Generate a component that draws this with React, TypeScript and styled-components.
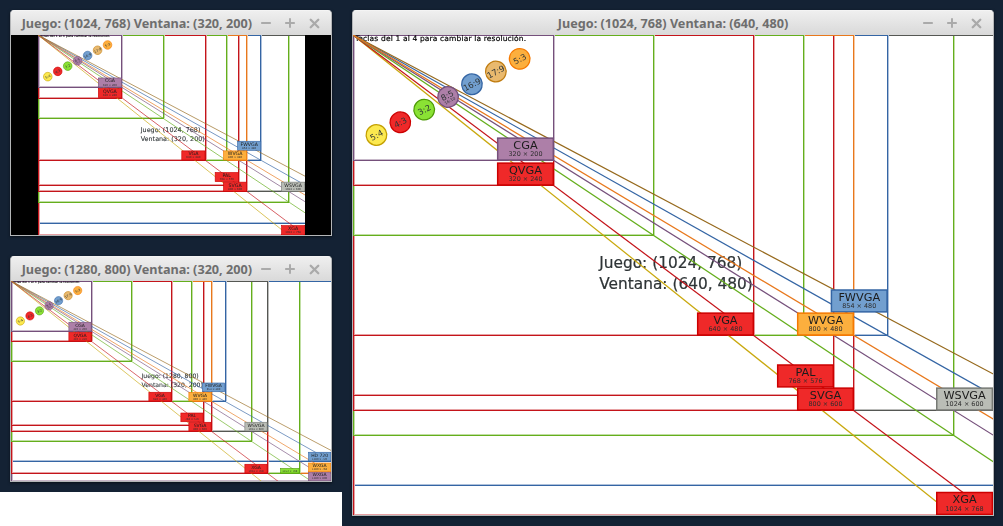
import styled, { createGlobalStyle } from 'styled-components';
import { Minus, Plus, X } from 'lucide-react';

const GlobalStyle = createGlobalStyle`
  html, body {
    margin: 0;
    height: 100%;
    background: #142234;
    overflow: hidden;
  }
`;

interface Tone {
  line: string;
  ghost: string;
  fill: string;
  edge: string;
}

const TONES: Record<string, Tone> = {
  yellow: { line: '#c9a80e', ghost: '#e9dc9f', fill: '#fce94f', edge: '#c4a000' },
  red: { line: '#c4141a', ghost: '#e7a1a3', fill: '#ef2929', edge: '#cc0000' },
  green: { line: '#65ae1c', ghost: '#c1dfa4', fill: '#8ae234', edge: '#4e9a06' },
  orange: { line: '#e8781c', ghost: '#f6c9a4', fill: '#fcaf3e', edge: '#f57900' },
  purple: { line: '#75507b', ghost: '#c8b9ca', fill: '#ad7fa8', edge: '#75507b' },
  blue: { line: '#3465a4', ghost: '#aec1db', fill: '#729fcf', edge: '#3465a4' },
  brown: { line: '#96691c', ghost: '#d5c3a4', fill: '#e9b96e', edge: '#c17d11' },
  grey: { line: '#555753', ghost: '#bbbcba', fill: '#babdb6', edge: '#777a75' },
};

interface Mode {
  w: number;
  h: number;
  tone: string;
  name?: string;
  bottom?: number;
  small?: boolean;
}

const MODES: Mode[] = [
  { w: 1280, h: 800, tone: 'purple', name: 'WXGA' },
  { w: 1280, h: 768, tone: 'orange', name: 'WXGA', bottom: 763 },
  { w: 1152, h: 768, tone: 'green', small: true },
  { w: 1280, h: 720, tone: 'blue', name: 'HD 720' },
  { w: 1024, h: 768, tone: 'red', name: 'XGA' },
  { w: 960, h: 640, tone: 'green' },
  { w: 1024, h: 600, tone: 'grey', name: 'WSVGA' },
  { w: 800, h: 600, tone: 'red', name: 'SVGA' },
  { w: 768, h: 576, tone: 'red', name: 'PAL', bottom: 563 },
  { w: 854, h: 480, tone: 'blue', name: 'FWVGA', bottom: 443 },
  { w: 800, h: 480, tone: 'orange', name: 'WVGA' },
  { w: 720, h: 480, tone: 'green' },
  { w: 640, h: 480, tone: 'red', name: 'VGA' },
  { w: 480, h: 320, tone: 'green' },
  { w: 320, h: 240, tone: 'red', name: 'QVGA' },
  { w: 320, h: 200, tone: 'purple', name: 'CGA' },
];

const RATIOS = [
  { text: '5:4', tone: 'yellow', slope: 4 / 5 },
  { text: '4:3', tone: 'red', slope: 3 / 4 },
  { text: '3:2', tone: 'green', slope: 2 / 3 },
  { text: '8:5', tone: 'purple', slope: 5 / 8, sub: '16:10' },
  { text: '16:9', tone: 'blue', slope: 9 / 16 },
  { text: '17:9', tone: 'brown', slope: 9 / 17 },
  { text: '5:3', tone: 'orange', slope: 3 / 5 },
];

const LABEL_W = 91;
const LABEL_H = 37;

// one pixel frame as a filled ring, w and h are whole pixels
const framePath = (w: number, h: number) =>
  `M0 0H${w + 1}V${h + 1}H0Z M1 1V${h}H${w}V1Z`;

const ResolutionChart = ({
  gameW,
  gameH,
  viewW,
  viewH,
  lineWidth,
  blur,
}: {
  gameW: number;
  gameH: number;
  viewW: number;
  viewH: number;
  lineWidth: number;
  blur: number;
}) => {
  const scale = Math.min(viewW / gameW, viewH / gameH);
  // whole pixels, so outlines that share an edge don't blend into each other
  const chartW = Math.round(gameW * scale);
  const chartH = Math.round(gameH * scale);
  return (
    <Viewport>
      <Chart
        width={chartW}
        height={chartH}
        viewBox={`0 0 ${gameW} ${gameH}`}
        preserveAspectRatio="none"
      >
        <rect width={gameW} height={gameH} fill="#fff" />
        <g transform={`scale(${gameW / chartW} ${gameH / chartH})`}>
          {MODES.map((m) => {
            const d = framePath(Math.round(m.w * scale), Math.round(m.h * scale));
            return (
              <g key={`${m.w}x${m.h}`}>
                <path
                  d={d}
                  transform="translate(1 -1)"
                  fill={TONES[m.tone].ghost}
                  fillRule="evenodd"
                />
                <path d={d} fill={TONES[m.tone].line} fillRule="evenodd" />
              </g>
            );
          })}
        </g>
        <SoftLayer $blur={blur}>
          <HintText x={3} y={9} textLength={274} lengthAdjust="spacing">
            Teclas del 1 al 4 para cambiar la resolución.
          </HintText>
          <InfoText x={gameW / 2 - 118} y={gameH / 2 - 12}>
            Juego: ({gameW}, {gameH})
          </InfoText>
          <InfoText x={gameW / 2 - 118} y={gameH / 2 + 22}>
            Ventana: ({viewW}, {viewH})
          </InfoText>
          {RATIOS.map((r) => (
            <line
              key={r.text}
              x1={0}
              y1={0}
              x2={1400}
              y2={1400 * r.slope}
              stroke={TONES[r.tone].line}
              strokeWidth={lineWidth}
            />
          ))}
          {MODES.filter((m) => (m.name || m.small) && m.w <= gameW && m.h <= gameH).map((m) => {
            const tone = TONES[m.tone];
            const width = m.small ? 76 : LABEL_W;
            const height = m.small ? 20 : LABEL_H;
            const bottom = m.bottom ?? m.h;
            const x = Math.min(m.w - width + 1.5, gameW - width);
            const y = Math.min(bottom - height + 1, gameH - height);
            return (
              <g key={`label-${m.w}x${m.h}`}>
                <rect
                  x={x + 1}
                  y={y + 1}
                  width={width - 2}
                  height={height - 2}
                  fill={tone.fill}
                  stroke={tone.edge}
                  strokeWidth={2.4}
                />
                {m.name && (
                  <LabelName x={x + width / 2} y={y + 18}>
                    {m.name}
                  </LabelName>
                )}
                <LabelSize x={x + width / 2} y={m.small ? y + 14 : y + 30}>
                  {m.w} × {m.h}
                </LabelSize>
              </g>
            );
          })}
          {RATIOS.map((r, i) => {
            const tone = TONES[r.tone];
            const cx = 37.5 + i * 38.2;
            const cy = 160 - i * 20.3;
            return (
              <g key={`dot-${r.text}`} transform={`rotate(-28 ${cx} ${cy})`}>
                <circle
                  cx={cx}
                  cy={cy}
                  r={16.5}
                  fill={tone.fill}
                  stroke={tone.edge}
                  strokeWidth={2}
                />
                <RatioText x={cx} y={r.sub ? cy + 2 : cy + 5}>
                  {r.text}
                </RatioText>
                {r.sub && (
                  <RatioSub x={cx} y={cy + 9}>
                    {r.sub}
                  </RatioSub>
                )}
              </g>
            );
          })}
        </SoftLayer>
      </Chart>
    </Viewport>
  );
};

const GameWindow = ({
  left,
  top,
  gameW,
  gameH,
  viewW,
  viewH,
  lineWidth,
  blur,
}: {
  left: number;
  top: number;
  gameW: number;
  gameH: number;
  viewW: number;
  viewH: number;
  lineWidth: number;
  blur: number;
}) => (
  <Window $left={left} $top={top} $width={viewW}>
    <TitleBar>
      <Title>
        Juego: ({gameW}, {gameH}) Ventana: ({viewW}, {viewH})
      </Title>
      <Controls>
        <ControlButton>
          <Minus size={14} strokeWidth={3.4} />
        </ControlButton>
        <ControlButton>
          <Plus size={14} strokeWidth={3.4} />
        </ControlButton>
        <ControlButton>
          <X size={15} strokeWidth={3.8} />
        </ControlButton>
      </Controls>
    </TitleBar>
    <ResolutionChart
      gameW={gameW}
      gameH={gameH}
      viewW={viewW}
      viewH={viewH}
      lineWidth={lineWidth}
      blur={blur}
    />
  </Window>
);

const App = () => (
  <Desktop>
    <GlobalStyle />
    <GameWindow left={10} top={10} gameW={1024} gameH={768} viewW={320} viewH={200} lineWidth={2.6} blur={0.3} />
    <GameWindow left={10} top={256} gameW={1280} gameH={800} viewW={320} viewH={200} lineWidth={2.6} blur={0.3} />
    <GameWindow left={352} top={10} gameW={1024} gameH={768} viewW={640} viewH={480} lineWidth={2} blur={0.25} />
    <BlankArea />
  </Desktop>
);

export default App;

const Desktop = styled.div`
  position: relative;
  width: 1003px;
  height: 526px;
  overflow: hidden;
  background: #142234;
`;

const BlankArea = styled.div`
  position: absolute;
  left: 0;
  top: 492px;
  width: 342px;
  height: 34px;
  background: #fff;
`;

const Window = styled.div<{ $left: number; $top: number; $width: number }>`
  position: absolute;
  left: ${(p) => p.$left}px;
  top: ${(p) => p.$top}px;
  width: ${(p) => p.$width}px;
  display: flex;
  flex-direction: column;
  border: 1px solid #b4b6b8;
  border-top-color: #f4f4f4;
  border-radius: 4px 4px 0 0;
  box-shadow: 0 1px 3px rgba(0, 0, 0, 0.55);
  background: #fff;
`;

const TitleBar = styled.div`
  height: 24px;
  display: grid;
  grid-template-columns: minmax(9px, 1fr) auto minmax(79px, 1fr);
  grid-template-areas: '. title controls';
  align-items: center;
  background: linear-gradient(#efefef, #d9d9d9);
  border-radius: 3px 3px 0 0;
`;

const Title = styled.div`
  grid-area: title;
  font: bold 12.65px 'Noto Sans', sans-serif;
  color: #6e6e6e;
  white-space: nowrap;
`;

const Controls = styled.div`
  grid-area: controls;
  display: flex;
  justify-content: flex-end;
  padding-right: 5px;
  color: #aaaaaa;
`;

const ControlButton = styled.div`
  width: 24px;
  display: flex;
  align-items: center;
  justify-content: center;
`;

const Viewport = styled.div`
  position: relative;
  display: grid;
  grid-template-columns: 1fr auto 1fr;
  background: #000;
  overflow: hidden;
`;

const Chart = styled.svg`
  display: block;
  grid-column: 2;
`;

const SoftLayer = styled.g<{ $blur: number }>`
  filter: blur(${(p) => p.$blur}px);
`;

const HintText = styled.text`
  font: 12px 'DejaVu Sans', sans-serif;
  fill: #000;
  stroke: #000;
  stroke-width: 0.3;
`;

const InfoText = styled.text`
  font: 24.6px 'DejaVu Sans', sans-serif;
  fill: #2e3436;
  stroke: #2e3436;
  stroke-width: 0.35;
`;

const LabelName = styled.text`
  font: 18px 'DejaVu Sans', sans-serif;
  fill: #1c1c1c;
  text-anchor: middle;
`;

const LabelSize = styled.text`
  font: 10.3px 'DejaVu Sans', sans-serif;
  fill: #2e2e2e;
  text-anchor: middle;
`;

const RatioText = styled.text`
  font: 13.2px 'DejaVu Sans', sans-serif;
  fill: #2e3436;
  text-anchor: middle;
`;

const RatioSub = styled.text`
  font: 6.5px 'DejaVu Sans', sans-serif;
  fill: #2e3436;
  text-anchor: middle;
`;
